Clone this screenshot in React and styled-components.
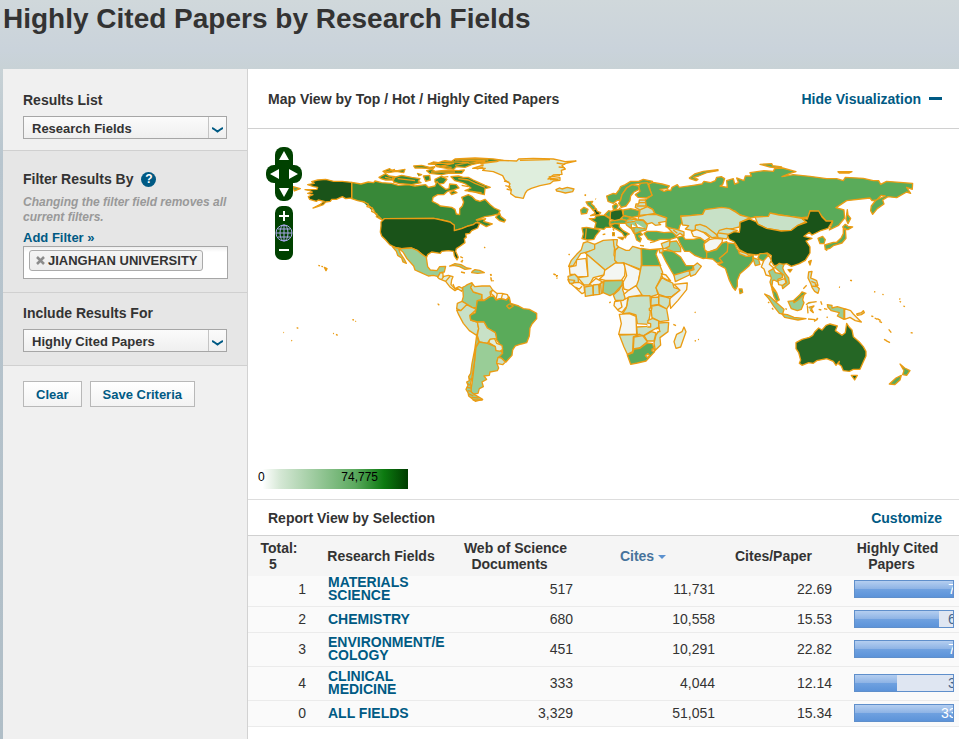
import React from 'react'
import styled, { createGlobalStyle } from 'styled-components';

const GlobalStyle = createGlobalStyle`
  * {
    box-sizing: border-box;
  }
  body {
    margin: 0;
    background: #b3c0c8;
    color: #333;
    font-family: "Liberation Sans", Arial, sans-serif;
    font-size: 14px;
  }
  a {
    color: #005a84;
    text-decoration: none;
  }
`;

const Page = styled.div`
  min-height: 100vh;
  display: flex;
  flex-direction: column;
  background: linear-gradient(180deg, #d0d8db 0px, #cad3db 50px, #c8d2d6 69px, #b8c5ce 160px, #b0bec7 100%);
`;

const Title = styled.h1`
  margin: 0;
  height: 69px;
  padding: 3px;
  font-size: 28px;
  line-height: 32px;
`;

const Body = styled.div`
  flex: 1;
  display: flex;
  margin-left: 3px;
`;

const Sidebar = styled.aside`
  flex: 0 0 245px;
  background: #f0f0f0;
  border-right: 1px solid #d2d2d2;
`;

const Section = styled.section`
  padding: ${(props) => props.$top}px 19px ${(props) => props.$bottom}px 20px;
  background: ${(props) => (props.$shaded ? '#e6e6e6' : '#f0f0f0')};
  border-bottom: 1px solid #d0d0d0;
`;

const Heading = styled.h2`
  display: flex;
  align-items: center;
  gap: 8px;
  margin: 0 0 6px;
  font-size: 14px;
  line-height: 20px;
`;

const Label = styled.label`
  display: block;
`;

const HelpButton = styled.button`
  width: 15px;
  height: 15px;
  padding: 0;
  border: 0;
  border-radius: 50%;
  background: #005a84;
  color: #fff;
  font: bold 12px/15px "Liberation Sans", Arial, sans-serif;
`;

const SelectBox = styled.div`
  position: relative;
  width: 204px;
  height: 23px;
  svg {
    position: absolute;
    right: 4px;
    top: 10px;
    pointer-events: none;
  }
  &::after {
    content: "";
    position: absolute;
    right: 18px;
    top: 1px;
    bottom: 1px;
    border-left: 1px solid #c4c4c4;
    pointer-events: none;
  }
`;

const Select = styled.select`
  appearance: none;
  width: 100%;
  height: 100%;
  padding: 2px 24px 0 8px;
  border: 1px solid #a6a6a6;
  border-radius: 0;
  background: linear-gradient(#fbfbfb, #efefef);
  color: #333;
  font: bold 13px/20px "Liberation Sans", Arial, sans-serif;
`;

const Note = styled.p`
  margin: 0 0 5px;
  color: #999;
  font-size: 12px;
  font-weight: bold;
  font-style: italic;
  line-height: 15px;
`;

const AddFilter = styled.a`
  display: block;
  font-size: 13px;
  font-weight: bold;
  line-height: 16px;
`;

const FilterBox = styled.div`
  width: 205px;
  height: 33px;
  padding: 3px 5px;
  border: 1px solid #a6a6a6;
  background: linear-gradient(#eee, #fff 5px);
`;

const Tag = styled.span`
  display: inline-flex;
  align-items: center;
  gap: 3px;
  height: 21px;
  padding: 0 4px 0 6px;
  border: 1px solid #aaa;
  border-radius: 3px;
  background: linear-gradient(#f4f4f4, #ececec);
  font-size: 13px;
  font-weight: bold;
  white-space: nowrap;
`;

const RemoveButton = styled.button`
  display: flex;
  padding: 0;
  border: 0;
  background: none;
`;

const Actions = styled.div`
  display: flex;
  gap: 8px;
  padding: 15px 20px;
`;

const Button = styled.button`
  height: 26px;
  padding: 1px 12px 0;
  border: 1px solid #b8b8b8;
  background: linear-gradient(#fff, #f3f3f3);
  color: #005a84;
  font: bold 13px/20px "Liberation Sans", Arial, sans-serif;
`;

const Main = styled.main`
  flex: 1;
  min-width: 0;
  background: #fff;
`;

const PanelHead = styled.div`
  display: flex;
  align-items: center;
  justify-content: space-between;
  height: ${(props) => props.$height}px;
  padding: 0 17px 0 20px;
  border-bottom: 1px solid #d0d0d0;
  h2 {
    margin: 0;
    font-size: 14px;
  }
  a {
    display: flex;
    align-items: center;
    gap: 8px;
    font-weight: bold;
  }
`;

const Dash = styled.span`
  width: 13px;
  height: 3px;
  background: #005a84;
`;

const MapPanel = styled.div`
  position: relative;
  height: 371px;
  border-bottom: 1px solid #ddd;
  overflow: hidden;
`;

const World = styled.svg`
  display: block;
  width: 100%;
  height: 100%;
`;

const MapControls = styled.div`
  position: absolute;
  left: 18px;
  top: 18px;
  display: flex;
  flex-direction: column;
  align-items: center;
  gap: 5px;
  button {
    padding: 0;
    border: 0;
    background: none;
  }
`;

const PanPad = styled.div`
  position: relative;
  display: grid;
  grid-template-columns: repeat(3, 12px);
  grid-template-rows: repeat(3, 18px);
  svg {
    position: absolute;
    pointer-events: none;
  }
`;

const PanButton = styled.button`
  grid-area: ${(props) => props.$cell};
`;

const ZoomBar = styled.div`
  display: flex;
  flex-direction: column;
  width: 18px;
  border-radius: 7px;
  background: #004100;
  button {
    height: 18px;
  }
  svg {
    display: block;
  }
`;

const Legend = styled.div`
  position: absolute;
  left: 10px;
  bottom: 10px;
  display: flex;
  justify-content: space-between;
  width: 150px;
  height: 20px;
  padding-right: 30px;
  background: linear-gradient(90deg, #fff 0%, #fff 3%, #d4e7d4 15%, #5ba95e 65%, #0c7a10 84%, #003c00 100%);
  color: #000;
  font-size: 12px;
  line-height: 16px;
`;

const Table = styled.table`
  width: 100%;
  table-layout: fixed;
  border-collapse: separate;
  border-spacing: 0;
`;

const Col = styled.col`
  width: ${(props) => props.$width};
`;

const Th = styled.th`
  height: 40px;
  padding: 0 ${(props) => props.$end}px 0 ${(props) => props.$start}px;
  background: #f5f5f5;
  color: ${(props) => (props.$sorted ? '#47739c' : '#333')};
  line-height: 16px;
  white-space: nowrap;
`;

const SortMark = styled.span`
  display: inline-block;
  margin-left: 4px;
  border: 4px solid transparent;
  border-top-color: ${(props) => (props.$on ? '#5b91cf' : 'transparent')};
  border-bottom: 0;
  vertical-align: middle;
`;

const Row = styled.tr`
  background: #fafafa;
  &:first-child td {
    padding-top: 0;
  }
`;

const Td = styled.td`
  padding: 3px ${(props) => props.$end}px 4px ${(props) => props.$start}px;
  border-bottom: 1px solid #ebebeb;
  line-height: 18px;
  text-align: ${(props) => props.$align || 'right'};
`;

const FieldLink = styled.a`
  display: block;
  font-weight: bold;
  line-height: 13px;
`;

const Bar = styled.div`
  position: relative;
  height: 18px;
  border: 1px solid #5f8fcb;
  background: #dfe6f2;
  overflow: hidden;
`;

const Fill = styled.div`
  height: 100%;
  background: linear-gradient(#b4cef0, #8db3e5 50%, #6fa1e0 50%, #5c93d9);
`;

const BarValue = styled.span`
  position: absolute;
  top: 0;
  left: ${(props) => (props.$wide ? 86 : 93)}px;
  color: ${(props) => (props.$light ? '#fff' : '#47668c')};
  line-height: 17px;
`;

const green = {
  none: '#f4f6f3',
  pale: '#dfeedd',
  light: '#c8e1c7',
  mid: '#99cd97',
  base: '#5aab5a',
  strong: '#388838',
  deep: '#256625',
  top: '#1a5319',
};

// each region keeps its own origin, drawn at three units to the pixel
const regions = [
  {
    x: 255, y: 140,
    shapes: [
      ['strong', 'M520 72L535 66L550 68L570 62L590 64L600 57L660 54L715 57L745 61L700 66L668 70L650 74L630 82L604 80L596 88L570 84L545 80L560 74Z'],
      ['strong', 'M384 94L404 86L412 92L428 92L450 88L446 98L424 94L400 98ZM476 78L500 76L524 82L540 80L534 86L500 84L480 84ZM515 92L530 88L540 94L580 90L610 92L628 90L620 100L580 100L560 104L524 100Z'],
      ['strong', 'M372 112L392 101L402 108L420 110L416 120L392 120L378 116ZM412 114L440 106L470 112L495 116L490 124L498 128L470 134L430 130L416 126ZM505 108L524 106L526 120L512 124ZM540 118L560 108L576 118L566 130L550 132L540 126Z'],
      ['strong', 'M588 110L610 108L625 112L640 112L655 120L672 128L690 136L706 142L690 146L688 164L672 160L652 154L630 152L648 144L632 132L622 128L600 122ZM585 158L596 152L606 158L590 164Z'],
      ['strong', 'M290 127L318 132L340 126L356 128L360 123L380 128L410 130L430 136L460 134L480 138L512 134L520 142L540 138L546 124L556 136L572 148L582 146L584 132L604 134L612 144L596 150L578 154L566 164L548 164L534 172L532 184L548 192L556 198L590 202L600 208L604 222L614 224L614 206L622 198L626 186L620 172L640 164L652 170L662 180L675 184L690 178L698 186L706 194L718 204L735 212L730 222L710 227L690 230L680 234L664 240L672 240L692 236L686 244L712 252L694 260L680 252L668 246L655 254L640 258L620 266L598 272L598 256L585 246L560 240L536 235L388 236L384 242L372 230L362 222L355 208L340 196L328 186L308 182L290 176Z'],
      ['strong', 'M722 232L734 220L738 230L752 240L748 246L734 242Z'],
      ['strong', 'M530 70L596 70L560 78M560 64L640 68L600 76M620 62L690 64L640 70M540 76L590 82M600 60L700 60M528 96L600 96M428 116L480 122M390 112L410 116M386 98L420 88M486 100L500 104L490 108M560 112L580 110M620 136L640 140M610 116L640 120L660 130L690 142M640 154L680 158M322 184L340 192L336 200L352 204L350 214L366 222L364 230L378 238'],
      ['top', 'M158 134L178 130L170 125L188 120L212 118L236 124L262 124L290 127L290 174L272 176L262 170L244 178L230 178L226 184L212 186L205 194L190 199L174 204L196 193L208 184L190 180L184 184L164 178L160 170L174 164L158 160L172 156L164 152L150 149L186 148L188 142L176 140Z'],
      ['top', 'M388 236L536 235L560 240L585 246L598 256L598 272L620 266L640 258L655 254L662 248L674 250L668 264L650 272L644 280L632 282L634 292L628 296L630 308L616 318L604 326L602 334L610 352L606 360L598 348L596 334L580 332L560 334L556 340L530 336L518 344L514 354L500 342L488 332L470 324L440 326L420 322L404 314L392 300L380 288L376 276L378 258L378 246Z'],
      ['mid', 'M412 320L426 324L440 326L470 324L488 332L500 342L514 352L518 380L526 390L546 392L554 380L572 379L568 396L556 398L550 410L535 406L520 408L498 398L480 390L476 378L456 356L444 336L430 324L436 340L448 358L454 370L444 366L440 354L428 346L424 334Z'],
      ['pale', 'M548 412L556 398L564 400L564 410L580 406L594 410L590 420L588 434L600 446L612 440L624 446L620 454L608 446L600 452L586 442L572 424L552 416Z'],
      ['mid', 'M584 378L600 371L618 374L636 384L648 386L630 388L614 380L596 376ZM652 394L660 389L674 391L688 398L668 400L650 398ZM618 396l12 3'],
      ['base', 'M114 140L136 146L118 153ZM208 382L216 386L213 392ZM190 376l5 2M199 379l5 1M548 491l5 5M616 350l8 4M620 364l4-4M706 402l3 6M708 416l2 8M292 539l5 1M301 543l2 2M125 563l5 2M109 601l2 2M243 583l5 3M234 580l3 1M85 577l2 1M687 322l4 1'],
      ['none', 'M572 424L586 408M600 446L594 432M566 410L560 418'],
    ],
  },
  {
    x: 450, y: 145,
    shapes: [
      ['pale', 'M68 70L100 60L92 56L140 50L150 46L200 48L206 42L250 40L310 42L330 46L345 50L378 48L344 56L336 62L346 72L334 76L336 88L310 90L294 102L330 98L330 106L310 108L300 116L270 122L244 130L232 136L226 144L220 160L208 158L196 156L182 146L184 134L176 126L180 116L164 104L158 92L130 80L98 76L106 70Z'],
      ['pale', 'M296 96L330 92M300 104L326 104M162 108L178 112M166 122L182 126M170 132L184 136M210 46L300 44M100 66L80 72M320 54L346 58M326 66L344 68'],
      ['light', 'M318 134L328 129L336 132L352 127L372 132L368 140L346 144L330 140L320 138Z'],
      ['light', 'M312 388l6 2M318 392l6 0M320 398l2 3M356 328l3 1M103 307l2 1M404 150l4 2'],
    ],
  },
  {
    x: 440, y: 260,
    shapes: [
      ['mid', 'M68 82L76 78L82 74L96 68L98 76L92 82L100 96L126 104L124 118L112 122L110 144L96 142L80 132L66 124L70 110Z'],
      ['light', 'M98 72L104 80L126 78L150 78L158 90L150 96L152 108L132 122L126 118L126 104L100 96L92 82Z'],
      ['none', 'M158 90L170 100L186 100L202 104L206 112L198 120L182 116L168 120L162 108L152 100ZM172 101L168 118M188 101L184 116'],
      ['light', 'M66 124L80 132L78 140L62 152L50 146L52 130Z'],
      ['light', 'M50 150L62 152L80 134L96 142L110 148L90 166L92 180L112 186L116 206L110 226L88 212L70 190L56 164Z'],
      ['base', 'M112 122L132 122L150 110L160 108L168 120L182 116L200 120L208 112L212 130L236 138L250 146L268 148L290 160L290 176L276 192L270 204L268 228L260 248L244 252L226 258L218 270L216 286L198 306L176 290L188 276L186 262L170 240L166 218L142 204L132 186L112 186L92 180L90 166L106 158Z'],
      ['base', 'M200 138L208 132L220 138L208 146Z'],
      ['light', 'M112 186L132 186L142 204L166 218L170 236L150 238L142 250L118 246L112 226L116 206Z'],
      ['pale', 'M150 238L164 236L170 250L186 256L188 268L178 276L166 272L166 260L146 248Z'],
      ['mid', 'M118 246L142 250L166 260L168 272L184 274L188 280L174 294L170 308L176 324L172 332L150 336L148 346L132 348L140 358L126 366L130 380L118 386L114 400L100 402L92 396L96 370L100 340L104 300L108 262Z'],
      ['light', 'M174 292L184 294L196 306L188 314L170 310Z'],
      ['mid', 'M110 226L116 246L106 262L104 300L98 340L92 370L94 396L104 404L128 418L106 424L86 408L84 398L78 388L84 376L80 366L88 362L86 350L92 340L96 310L104 270Z'],
      ['mid', 'M82 370L90 376M80 382L92 384M84 392L94 394M86 402L100 408M94 412L116 414M98 420L128 420M88 354L92 360'],
      ['pale', 'M62 4l6 2M152 42l2 4M152 52l2 6M158 64l2-4M340 42l6 2M348 50l4-2'],
    ],
  },
  {
    x: 560, y: 150,
    shapes: [
      ['base', 'M266 98L284 98L306 102L328 108L322 116L300 118L312 124L324 120L332 122L336 112L352 104L358 112L372 110L400 106L426 102L432 94L452 98L466 92L470 82L484 80L494 86L488 104L480 108L502 112L500 92L520 86L524 102L536 98L530 84L552 92L556 78L574 78L570 68L612 62L640 64L644 56L668 54L708 65L690 70L666 80L700 74L750 79L800 86L830 86L850 92L856 82L910 85L940 92L956 92L962 103L980 94L1030 98L1058 100L1057 118L1040 112L1052 130L1040 126L1010 143L984 140L968 150L972 162L952 176L938 193L932 182L934 168L948 150L976 138L964 136L950 150L936 152L930 144L860 152L842 164L828 173L852 180L854 204L836 226L808 240L818 216L800 215L776 187L750 183L746 201L725 203L690 199L635 191L625 199L585 201L570 205L540 195L525 183L485 175L435 179L428 193L390 197L362 198L372 212L360 226L356 240L340 238L318 230L318 214L320 204L290 194L284 190L278 178L262 170L258 166L256 150L276 136L270 120Z'],
      ['base', 'M388 84L404 72L430 64L474 59L474 62L440 68L416 78L400 82L414 88L408 92L390 86Z'],
      ['base', 'M140 138L160 130L168 132L178 118L182 110L196 104L212 94L236 94L250 88L278 94L272 100L240 100L216 104L200 114L186 134L182 150L170 152L160 160L144 154Z'],
      ['base', 'M182 150L186 134L200 114L216 104L236 108L238 118L222 126L212 138L210 152L198 168L184 172L176 160Z'],
      ['base', 'M236 108L242 100L262 98L270 120L276 136L258 144L234 142L226 134L240 124Z'],
      ['light', 'M238 150L256 150L258 166L262 172L240 180L226 172L228 162L236 162ZM236 158L258 158M230 168L260 168'],
      ['light', 'M240 180L262 170L278 178L284 190L262 194L238 196Z'],
      ['base', 'M190 180L212 176L238 182L236 198L216 202L190 196Z'],
      ['light', 'M236 200L262 194L290 194L320 204L318 214L296 218L302 224L286 226L276 218L262 222L250 210L234 208Z'],
      ['mid', 'M184 208L204 206L232 210L250 212L262 226L258 240L240 244L232 250L222 250L214 236L200 226L196 218ZM204 206L212 202L230 206M200 218L222 214L232 208M226 218L232 232L256 236M222 232L222 250M214 222L214 234L230 232'],
      ['base', 'M224 252L240 246L248 254L236 258L244 266L240 276L230 270ZM240 286L252 288'],
      ['base', 'M150 214L164 210L186 208L200 212L196 220L176 220L162 222L150 222ZM180 204L190 197L214 203L202 210'],
      ['strong', 'M152 226L164 220L178 222L178 230L190 242L208 252L200 256L196 264L186 248L170 238L160 234Z'],
      ['strong', 'M174 262L192 262L188 269ZM158 248L163 248L163 257L158 257ZM159 236l3 6'],
      ['strong', 'M88 206L104 206L108 198L122 196L134 196L150 206L148 222L152 232L138 232L132 238L104 234L108 218Z'],
      ['deep', 'M152 184L166 180L186 178L190 198L180 208L164 212L152 208L148 194Z'],
      ['base', 'M134 194L146 182L152 184L150 204ZM158 168L168 160L174 168L168 178L160 178ZM176 176l6-2'],
      ['base', 'M78 156L98 154L94 162L102 168L108 178L100 182L92 172L84 166Z'],
      ['top', 'M100 180L108 176L112 184L122 188L116 194L92 197L106 190Z'],
      ['base', 'M62 180L72 172L84 178L80 190L64 192Z'],
      ['strong', 'M66 234L80 232L112 238L120 242L108 256L102 268L82 270L66 266L70 252ZM79 236L76 266'],
      ['base', 'M252 250L262 244L290 244L312 248L340 246L350 262L330 268L300 268L284 274L264 268Z'],
      ['light', 'M322 232L350 238L372 246L372 258L360 250L350 258L336 246ZM340 240L352 250'],
      ['base', 'M352 262L368 258L376 268L400 268L430 262L436 276L432 290L440 308L452 322L430 326L404 316L388 304L374 304L362 284Z'],
      ['mid', 'M74 134l4 2M106 146l2 2M26 313l3 1M128 254l8-2M270 278l14-3'],
    ],
  },
  {
    x: 690, y: 155,
    shapes: [
      ['light', 'M-28 184L0 182L38 178L45 164L95 157L118 160L135 170L150 180L180 188L150 202L148 216L130 220L100 224L82 240L60 226L45 214L18 210L16 226L4 226L-14 222L-4 212L-22 210Z'],
      ['light', 'M16 212L30 208L50 216L78 238L84 246L66 248L48 234L16 226Z'],
      ['none', 'M4 230L20 224L40 232L60 248L44 258L30 248L10 244Z'],
      ['light', 'M82 238L88 226L110 220L142 226L132 234L116 240L110 252L84 248ZM86 234L118 238'],
      ['light', 'M195 186L235 184L240 174L268 180L300 184L335 190L348 200L322 212L304 226L274 228L230 220L204 208Z'],
      ['top', 'M112 240L132 230L148 232L150 216L150 202L178 192L198 200L204 208L230 220L274 228L304 226L322 212L350 202L334 190L352 192L360 168L386 168L396 186L408 198L428 198L414 220L390 228L366 240L358 232L342 244L366 250L348 258L360 276L360 294L346 316L328 326L304 334L290 326L270 330L252 332L242 316L244 302L232 294L198 300L170 296L148 284L138 268L132 260L118 254Z'],
      ['top', 'M294 344L306 343L300 351Z'],
      ['base', 'M384 250L398 244L406 254L402 266L390 266ZM356 320L364 316L360 330Z'],
      ['base', 'M404 270L430 262L440 262L454 248L460 236L460 220L466 220L468 250L456 264L430 272L420 280L406 284ZM458 216L466 208L474 214L488 216L474 224L462 222ZM472 164L474 180L482 190L474 206L468 192Z'],
      ['base', 'M210 28L245 26L248 32L275 36L272 40L240 36ZM444 50L486 50L478 54L448 54Z'],
      ['none', 'M42 266L58 254L76 250L98 252L96 262L80 282L54 292L44 284Z'],
      ['base', 'M50 292L80 284L96 264L110 260L118 274L112 290L96 304L98 320L82 324L68 312L50 310Z'],
      ['base', 'M114 264L134 266L140 280L148 290L170 302L190 302L188 318L176 334L150 356L142 376L142 394L136 406L128 396L118 376L106 340L84 328L98 322L88 310L98 302L112 290Z'],
      ['base', 'M148 402L156 402L158 412L150 416Z'],
      ['light', 'M146 288L170 296L180 304L168 304L148 296Z'],
      ['mid', 'M188 308L206 314L210 328L196 332Z'],
      ['base', 'M204 308L210 296L230 296L236 300L224 320L210 314Z'],
      ['none', 'M222 316L236 300L244 316L238 328L252 340L242 350L242 364L228 360L222 342L214 336Z'],
      ['base', 'M482 376l4 1'],
    ],
  },
  {
    x: 560, y: 235,
    shapes: [
      ['light', 'M70 24L82 20L104 28L104 44L76 52L62 56L52 72L40 92L26 94L34 76L50 58L64 44Z'],
      ['light', 'M104 28L130 16L162 14L164 34L162 60L170 82L136 106L76 54L104 42Z'],
      ['light', 'M160 14L172 14L170 30L176 36L166 46L162 34Z'],
      ['light', 'M166 46L176 36L198 46L208 46L218 34L244 42L244 104L190 84L176 88L164 76Z'],
      ['base', 'M244 40L270 44L294 42L288 58L300 88L302 92L246 92Z'],
      ['none', 'M28 96L48 92L50 74L78 70L84 124L54 126L44 118L30 118Z'],
      ['pale', 'M80 58L136 106L132 120L100 128L88 150L72 150L54 128L84 124Z'],
      ['none', 'M134 106L166 84L190 84L196 96L194 122L184 136L136 136L118 132L132 120Z'],
      ['none', 'M192 84L242 106L236 134L238 152L206 166L192 162L188 144L200 122Z'],
      ['light', 'M244 92L300 92L308 112L302 130L288 158L294 178L270 186L240 180L228 156L236 134Z'],
      ['light', 'M306 128L320 136L338 144L342 158L362 164L336 184L318 186L296 178L288 158Z'],
      ['none', 'M304 116L318 120L332 138L320 134L308 128Z'],
      ['none', 'M342 148L382 144L380 164L354 196L332 220L328 192L360 166Z'],
      ['light', 'M296 182L318 186L330 190L328 210L320 222L296 208Z'],
      ['light', 'M274 188L296 186L296 208L272 212Z'],
      ['light', 'M272 214L294 210L320 222L326 256L300 260L276 248Z'],
      ['light', 'M206 184L270 182L272 214L270 240L264 268L232 266L228 240L208 234L188 236L198 220Z'],
      ['light', 'M160 180L176 166L190 144L188 164L196 186L200 196L166 196Z'],
      ['none', 'M164 200L190 196L204 184L200 214L186 232L176 228L162 212ZM182 198L186 216L174 224'],
      ['none', 'M192 178L206 166L228 152L246 180L206 186L196 192Z'],
      ['mid', 'M132 138L188 136L186 150L164 174L150 182L128 172Z'],
      ['light', 'M24 124L44 118L54 128L56 144L26 140Z'],
      ['none', 'M30 144L58 142L72 152L74 172L66 176L44 156ZM46 156L58 162L66 154'],
      ['light', 'M24 134L44 136L40 144L30 146Z'],
      ['light', 'M74 156L98 152L100 180L76 184Z'],
      ['none', 'M88 148L108 130L126 140L120 150L98 152Z'],
      ['light', 'M100 150L116 148L118 178L100 180ZM118 148L130 140L128 174L118 178ZM122 148L124 174'],
      ['none', 'M178 238L208 236L228 244L230 298L176 298L184 266Z'],
      ['light', 'M230 276L262 274L264 256L278 250L296 258L296 276L270 290L252 302L232 298Z'],
      ['light', 'M296 264L326 262L324 290L300 308L302 330L286 346L282 324L288 300L298 286Z'],
      ['light', 'M252 302L274 290L288 294L282 318L262 318Z'],
      ['light', 'M178 300L240 298L220 306L218 350L202 358L192 336Z'],
      ['light', 'M222 306L248 302L262 320L240 338L220 342Z'],
      ['base', 'M202 360L218 354L222 342L240 340L262 324L278 326L284 350L258 378L232 384L212 388Z'],
      ['pale', 'M256 362L264 356L270 362L262 368ZM276 342L284 342L282 350L276 348ZM268 220L276 218L274 226L268 226Z'],
      ['none', 'M262 264L272 266L272 276L262 276M288 282L296 278L300 290L292 290'],
      ['pale', 'M372 276L378 290L362 336L348 340L342 320L350 298L366 290Z'],
      ['base', 'M302 48L316 46L340 50L362 66L378 92L402 92L396 104L370 112L344 124L334 108L318 80Z'],
      ['light', 'M342 120L370 112L390 106L388 120L346 140Z'],
      ['light', 'M400 94L412 84L424 94L406 118L392 124L388 108L402 104Z'],
      ['mid', 'M316 40L332 20L350 18L362 38L362 50L340 50Z'],
      ['light', 'M304 26L330 16L328 34L310 42Z'],
      ['light', 'M296 42L308 40L310 50L300 54Z'],
      ['light', 'M148 204l4-4M340 268l8 4M404 317l4 1M414 313l3 1M404 231l3 2'],
    ],
  },
  {
    x: 750, y: 250,
    shapes: [
      ['mid', 'M56 64L70 56L76 68L96 72L98 82L84 88L84 96L72 90L68 92L66 108L78 124L66 116L60 96L64 84Z'],
      ['mid', 'M74 52L88 40L102 44L98 54L104 68L116 84L118 100L98 116L96 106L110 98L102 76L90 66Z'],
      ['pale', 'M84 92L104 86L108 98L98 106L86 104Z'],
      ['base', 'M66 118L80 128L88 150L80 154L72 140Z'],
      ['mid', 'M44 132L58 138L84 162L102 178L98 192L88 190L72 170L56 146Z'],
      ['mid', 'M96 192L112 194L132 202L168 206L144 210L104 202Z'],
      ['mid', 'M114 154L134 152L148 138L162 134L158 150L162 158L154 178L142 182L124 176Z'],
      ['base', 'M130 152L148 136L156 126L168 130L154 140L144 150L132 158Z'],
      ['mid', 'M168 164L176 158L200 155M172 166L174 190M176 172L192 168L184 176L190 188L180 180M212 154l4 10M206 178l8 2M222 176l10 2M174 207l22 2M192 214l10-6M200 204l4 4M230 200l3 3M54 156l4 3M66 174l4 5M106 176l5 2M160 116l10-10'],
      ['mid', 'M232 164L246 166L246 174L262 170L282 176L282 208L262 198L268 188L244 182L234 172Z'],
      ['none', 'M284 176L302 182L310 192L318 200L334 216L316 212L300 202L284 208Z'],
      ['light', 'M320 192L334 188L340 182L343 188L334 194L322 196ZM364 198l6 2M374 204l8 4M382 206l10 6M388 214l8 4M416 238l8 10M402 268l8 4M408 272l12 6M482 248l6 1'],
      ['light', 'M176 66L186 64L182 84L192 88L200 92L204 106L196 104L208 116L204 130L194 124L186 112L182 100L174 84ZM184 94L198 100M184 108L200 110'],
      ['base', 'M300 91l6 1M267 111l3 1M372 125l4 1M397 133l4 1M448 146l3 2M449 154l4 3M460 168l5 2M228 0l4 1'],
      ['deep', 'M138 278L156 268L178 262L188 256L194 246L206 234L216 240L228 226L240 222L262 228L256 242L276 256L286 248L290 220L298 232L306 240L310 260L328 276L340 290L348 304L348 318L338 340L330 358L310 358L298 364L280 362L274 348L266 342L268 334L258 346L250 334L230 326L200 332L190 340L176 338L156 346L148 340L152 330L146 308L138 296Z'],
      ['deep', 'M304 376L322 376L314 390Z'],
      ['base', 'M450 342L464 354L480 362L470 376L458 374L462 362ZM454 376L450 390L434 404L418 402L438 384Z'],
    ],
  },
];

const WorldMap = () => (
  <World viewBox="248 129 711 370" preserveAspectRatio="xMinYMin meet" role="img" aria-label="Papers by country">
    {regions.map((region) => (
      <g
        key={`${region.x}-${region.y}`}
        transform={`translate(${region.x} ${region.y}) scale(.3333)`}
        stroke="#eb9c13"
        strokeWidth="4"
        strokeLinejoin="round"
      >
        {region.shapes.map(([tone, d]) => (
          <path key={d} d={d} fill={green[tone]} />
        ))}
      </g>
    ))}
  </World>
);

const Dropdown = ({ id, value, options }) => (
  <SelectBox>
    <Select id={id} defaultValue={value}>
      {options.map((option) => (
        <option key={option}>{option}</option>
      ))}
    </Select>
    <svg width="11" height="8" viewBox="0 0 11 8" fill="none" stroke="#005a84" strokeWidth="2">
      <path d="M0 2L2 3L5.500 5.500L9 3L11 2" />
    </svg>
  </SelectBox>
);

// head and cell hold the [left, right] padding of the column
const columns = [
  { title: 'Total:', second: '5', width: '70px', head: [4, 12], cell: [4, 12] },
  { title: 'Research Fields', width: '138px', head: [0, 0], cell: [10, 10] },
  { title: 'Web of Science', second: 'Documents', width: '119px', head: [0, 0], cell: [0, 2] },
  { title: 'Cites', width: '140px', head: [0, 4], cell: [0, 0], sorted: true },
  { title: 'Cites/Paper', width: '127px', head: [2, 0], cell: [0, 10] },
  { title: 'Highly Cited', second: 'Papers', width: 'auto', head: [0, 6], cell: [12, 5] },
];

const rows = [
  { rank: 1, field: 'MATERIALS SCIENCE', docs: '517', cites: '11,731', ratio: '22.69', papers: '7', share: 100 },
  { rank: 2, field: 'CHEMISTRY', docs: '680', cites: '10,558', ratio: '15.53', papers: '6', share: 86 },
  { rank: 3, field: <>ENVIRONMENT/E<wbr />COLOGY</>, docs: '451', cites: '10,291', ratio: '22.82', papers: '7', share: 100 },
  { rank: 4, field: 'CLINICAL MEDICINE', docs: '333', cites: '4,044', ratio: '12.14', papers: '3', share: 43 },
  { rank: 0, field: 'ALL FIELDS', docs: '3,329', cites: '51,051', ratio: '15.34', papers: '33', share: 100 },
];

const pad = ([start, end]) => ({ $start: start, $end: end });

const App = () => {
  return (
    <>
      <GlobalStyle />
      <Page>
        <Title>Highly Cited Papers by Research Fields</Title>
        <Body>
          <Sidebar>
            <Section $top={21} $bottom={11}>
              <Heading><Label htmlFor="results">Results List</Label></Heading>
              <Dropdown id="results" value="Research Fields" options={['Research Fields', 'Authors', 'Institutions']} />
            </Section>
            <Section $shaded $top={18} $bottom={13}>
              <Heading>
                Filter Results By
                <HelpButton aria-label="Help">?</HelpButton>
              </Heading>
              <Note>Changing the filter field removes all current filters.</Note>
              <AddFilter href="#filter">Add Filter »</AddFilter>
              <FilterBox>
                <Tag>
                  <RemoveButton aria-label="Remove filter">
                    <svg width="9" height="9" viewBox="0 0 9 9" stroke="#8c8c8c" strokeWidth="2.500">
                      <path d="M1 1L8 8M8 1L1 8" />
                    </svg>
                  </RemoveButton>
                  JIANGHAN UNIVERSITY
                </Tag>
              </FilterBox>
            </Section>
            <Section $shaded $top={10} $bottom={13}>
              <Heading><Label htmlFor="include">Include Results For</Label></Heading>
              <Dropdown id="include" value="Highly Cited Papers" options={['Highly Cited Papers', 'Hot Papers', 'Top Papers']} />
            </Section>
            <Actions>
              <Button>Clear</Button>
              <Button>Save Criteria</Button>
            </Actions>
          </Sidebar>
          <Main>
            <PanelHead $height={60}>
              <h2>Map View by Top / Hot / Highly Cited Papers</h2>
              <a href="#map">Hide Visualization <Dash /></a>
            </PanelHead>
            <MapPanel>
              <WorldMap />
              <MapControls>
                <PanPad>
                  <PanButton $cell="1 / 2" aria-label="Pan up" />
                  <PanButton $cell="2 / 1" aria-label="Pan left" />
                  <PanButton $cell="2 / 3" aria-label="Pan right" />
                  <PanButton $cell="3 / 2" aria-label="Pan down" />
                  <svg width="36" height="54" viewBox="0 0 36 54">
                    <rect x="9" y="0" width="18" height="54" rx="8" fill="#004100" />
                    <rect x="0" y="18" width="36" height="18" rx="8" fill="#004100" />
                    <path d="M18 4L23 13H13ZM18 50L23 41H13ZM4 27L13 22V32ZM32 27L23 22V32Z" fill="#fff" />
                  </svg>
                </PanPad>
                <ZoomBar>
                  <button aria-label="Zoom in">
                    <svg width="18" height="18" stroke="#fff" strokeWidth="2"><path d="M4 10H14M9 5V15" /></svg>
                  </button>
                  <button aria-label="Whole world">
                    <svg width="18" height="18" fill="none" stroke="#aaa8ea">
                      <circle cx="9" cy="9" r="8" />
                      <ellipse cx="9" cy="9" rx="4" ry="8" />
                      <path d="M1 9H17M9 1V17M3 5H15M3 13H15" />
                    </svg>
                  </button>
                  <button aria-label="Zoom out">
                    <svg width="18" height="18" stroke="#fff" strokeWidth="2"><path d="M4 8H14" /></svg>
                  </button>
                </ZoomBar>
              </MapControls>
              <Legend><span>0</span><span>74,775</span></Legend>
            </MapPanel>
            <PanelHead $height={36}>
              <h2>Report View by Selection</h2>
              <a href="#customize">Customize</a>
            </PanelHead>
            <Table>
              <colgroup>
                {columns.map((column) => (
                  <Col key={column.title} $width={column.width} />
                ))}
              </colgroup>
              <thead>
                <tr>
                  {columns.map((column) => (
                    <Th key={column.title} {...pad(column.head)} $sorted={column.sorted}>
                      {column.title}
                      {column.second && <><br />{column.second}</>}
                      <SortMark $on={column.sorted} />
                    </Th>
                  ))}
                </tr>
              </thead>
              <tbody>
                {rows.map((row) => (
                  <Row key={row.rank}>
                    <Td {...pad(columns[0].cell)}>{row.rank}</Td>
                    <Td {...pad(columns[1].cell)} $align="left"><FieldLink href="#field">{row.field}</FieldLink></Td>
                    <Td {...pad(columns[2].cell)}>{row.docs}</Td>
                    <Td {...pad(columns[3].cell)}>{row.cites}</Td>
                    <Td {...pad(columns[4].cell)}>{row.ratio}</Td>
                    <Td {...pad(columns[5].cell)} $align="left">
                      <Bar>
                        <Fill style={{ width: `${row.share}%` }} />
                        <BarValue $light={row.share === 100} $wide={row.papers.length > 1}>{row.papers}</BarValue>
                      </Bar>
                    </Td>
                  </Row>
                ))}
              </tbody>
            </Table>
          </Main>
        </Body>
      </Page>
    </>
  )
}

export default App
